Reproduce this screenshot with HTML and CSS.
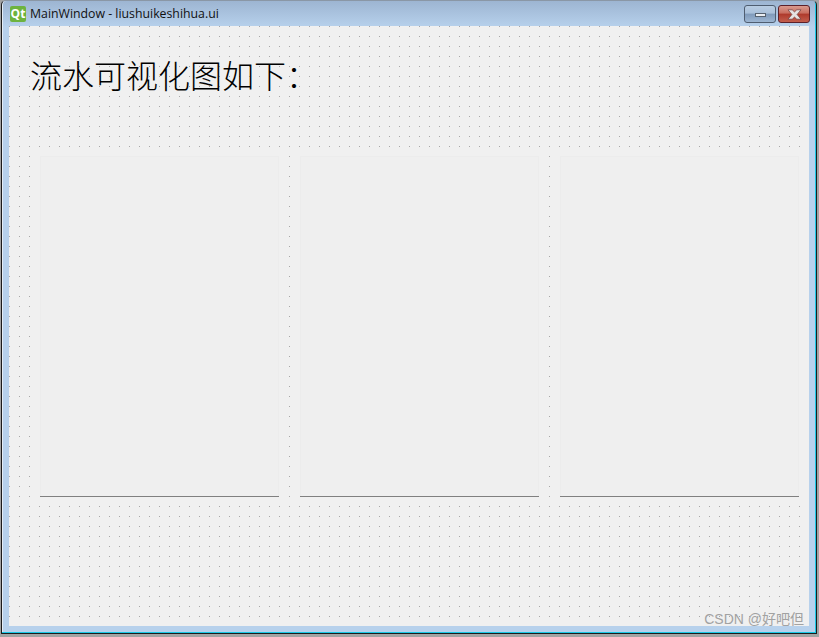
FILE: index.html
```html
<!DOCTYPE html>
<html lang="en">
<head>
  <meta charset="UTF-8">
  <title>MainWindow - liushuikeshihua.ui</title>
  <link rel="stylesheet" href="styles.css">
</head>
<body>

  <div class="window">
    <div class="titlebar">
      <span class="qt-logo">Qt</span>
      <span class="title">MainWindow - liushuikeshihua.ui</span>
      <div class="controls">
        <div class="btn-min"><span class="min-glyph"></span></div>
        <div class="btn-close">
          <svg width="17" height="11" viewBox="0 0 17 11">
            <path d="M2 .8h4.200l2.300 2.100L10.800 .8H15l-3.900 4.700 3.900 4.700h-4.200L8.500 8.100l-2.300 2.100H2l3.900-4.700z" fill="#e6e2e2" stroke="#6e3a3a" stroke-width="0.7"/>
          </svg>
        </div>
      </div>
    </div>

    <div class="canvas">
      <h1 class="heading">流水可视化图如下：</h1>
      <div class="panels">
        <div class="panel"></div>
        <div class="panel"></div>
        <div class="panel"></div>
      </div>
    </div>
  </div>

  <span class="watermark">CSDN @好吧但</span>

</body>
</html>
```

FILE: styles.css
```css
html, body {
  margin: 0;
  padding: 0;
}

body {
  width: 819px;
  height: 637px;
  overflow: hidden;
  background-color: #a3a3a3;
  font-family: "Open Sans", "Liberation Sans", sans-serif;
  position: relative;
}

.window {
  box-sizing: border-box;
  width: 816px;
  height: 634px;
  margin-left: 1px;
  display: flex;
  flex-direction: column;
  padding: 0 7px 7px 7px;
  border: 1px solid #1c1c1c;
  border-top-color: #8a97a6;
  border-radius: 5px 5px 0 0;
  background: linear-gradient(#9db5d2 0, #b7d1ec 26px, #b7d1ec 100%);
  box-shadow: inset -1px -1px 0 #19c8e6, inset 1px 0 0 #e4edf6;
}

.titlebar {
  height: 25px;
  flex: none;
  display: flex;
  align-items: center;
}

.qt-logo {
  width: 16px;
  height: 16px;
  margin-left: 1px;
  margin-top: 1px;
  background-color: #6db33f;
  border-radius: 2px;
  color: #fff;
  font-size: 12px;
  font-weight: 700;
  line-height: 16px;
  text-align: center;
}

.title {
  margin-left: 4px;
  font-size: 12.3px;
  color: #111;
}

.controls {
  margin-left: auto;
  margin-right: -1px;
  align-self: flex-start;
  margin-top: 4px;
  display: flex;
  gap: 2px;
}

.btn-min,
.btn-close {
  width: 32px;
  height: 18px;
  box-sizing: border-box;
  border: 1px solid #4f5d70;
  border-radius: 3px;
  display: flex;
  align-items: center;
  justify-content: center;
}

.btn-min {
  background: linear-gradient(#b8cce2 0, #a9c0da 45%, #7f9aba 50%, #9db6d2 100%);
}

.min-glyph {
  width: 11px;
  height: 4px;
  margin-top: 2px;
  background-color: #e9edf2;
  border: 1px solid #56616e;
  box-sizing: border-box;
}

.btn-close {
  border-color: #5c2029;
  background: linear-gradient(#d99a8e 0, #c86c5e 45%, #ae392b 50%, #c25e4d 100%);
}

.canvas {
  flex: 1;
  background-color: #f0f0f0;
  background-image: conic-gradient(from 270deg at 1px 1px, #a8a8a8 25%, transparent 0);
  background-size: 10px 10px;
}

.heading {
  margin: 25px 0 0 21px;
  font-family: "Noto Sans CJK SC", sans-serif;
  font-size: 32px;
  font-weight: 300;
  line-height: 46px;
  color: #000;
}

.panels {
  display: flex;
  gap: 21px;
  margin: 59px 0 0 31px;
}

.panel {
  width: 239px;
  height: 341px;
  box-sizing: border-box;
  background-color: #efefef;
  border-bottom: 1px solid #808080;
  box-shadow: inset 1px 1px 0 #ececec, inset -1px 0 0 #ececec, 0 0 0 1px #f0f0f0;
}

.watermark {
  position: absolute;
  right: 15px;
  bottom: 9px;
  font-family: "Liberation Sans", "Noto Sans CJK SC", sans-serif;
  font-size: 14px;
  color: #a2a2a2;
}
```
